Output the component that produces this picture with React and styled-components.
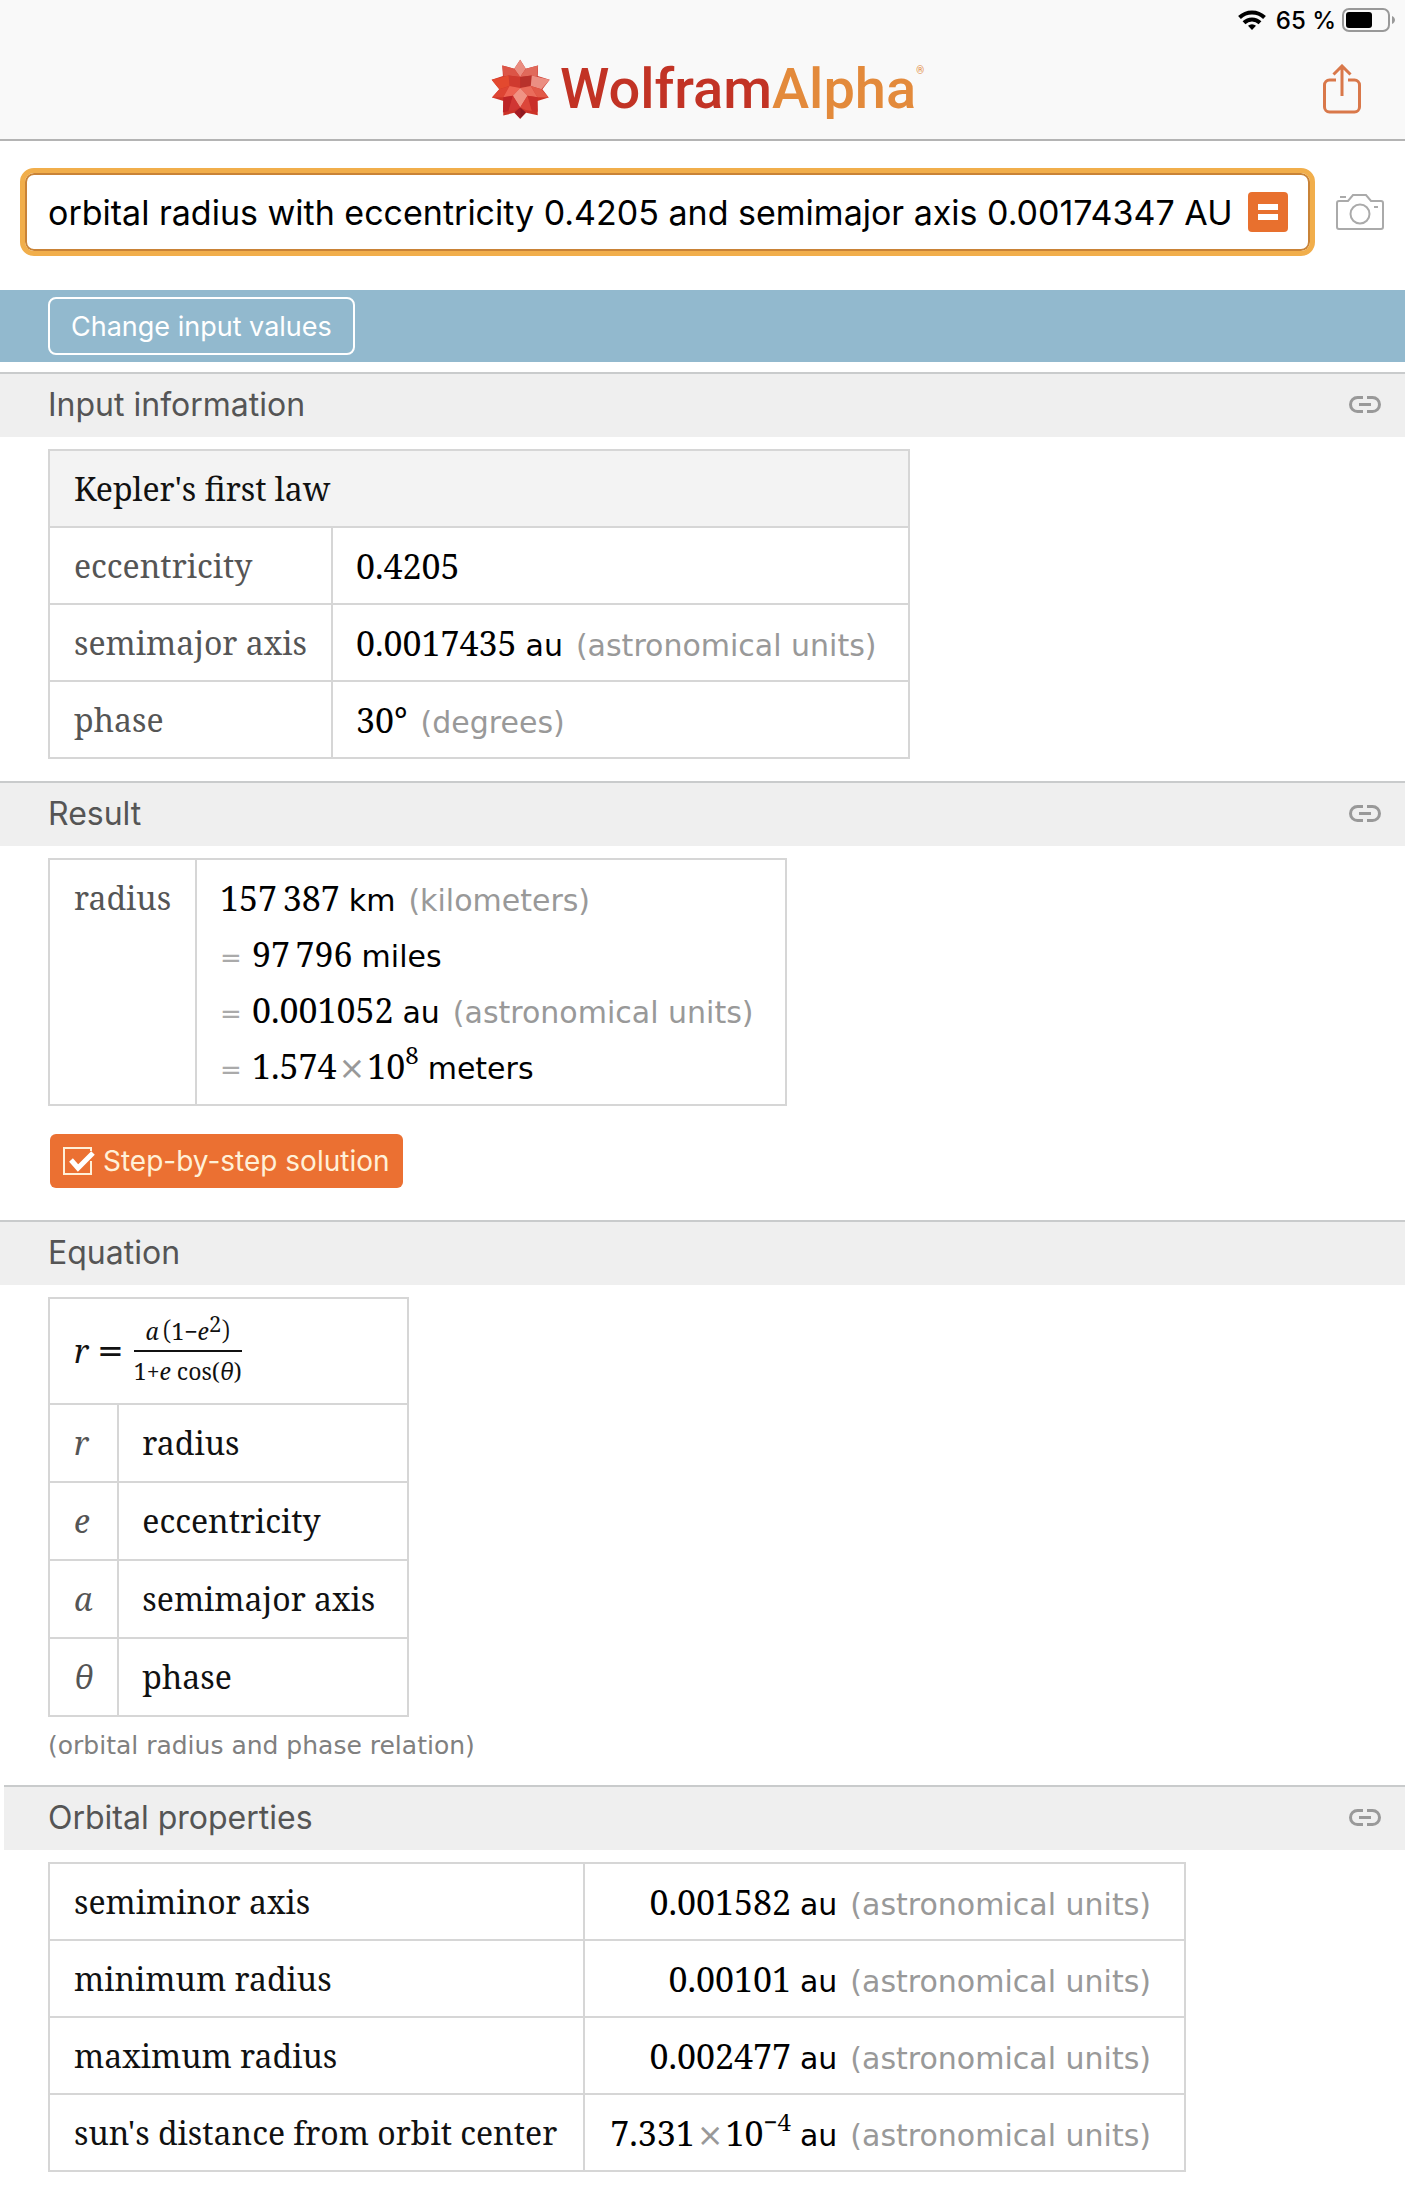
import React, { useState } from "react";
import styled, { createGlobalStyle } from "styled-components";

const GlobalStyle = createGlobalStyle`
  * {
    box-sizing: border-box;
  }
  body {
    margin: 0;
    background-color: #fff;
    color: #111;
    font-family: Inter, "Liberation Sans", sans-serif;
  }
`;

const serif = `"Noto Serif", "DejaVu Serif", serif`;
const sans = `"DejaVu Sans", sans-serif`;
const line = "#d6d6d6";

const Header = styled.header`
  background-color: #f9f9f9;
  border-bottom: 2px solid #b4b4b4;
`;
const StatusBar = styled.div`
  display: flex;
  align-items: center;
  justify-content: flex-end;
  height: 40px;
  padding: 0 10px;
  gap: 6px;
  color: #000;
  font-size: 24px;
  font-weight: 500;
`;
const TitleBar = styled.div`
  display: grid;
  grid-template-columns: 1fr auto 1fr;
  align-items: center;
  height: 99px;
  padding: 0 44px 2px 54px;
`;
const Logo = styled.a`
  grid-column: 2;
  display: flex;
  align-items: center;
  gap: 10px;
  text-decoration: none;
`;
const Wordmark = styled.span`
  display: flex;
  font-family: Roboto, sans-serif;
  font-size: 56px;
  font-weight: 500;
  line-height: 64px;
  color: #c23325;
`;
const Alpha = styled.span`
  color: #e38a3b;
`;
const Registered = styled.span`
  font-size: 10px;
  line-height: 28px;
  color: #e38a3b;
`;
const IconButton = styled.button`
  display: flex;
  justify-self: end;
  padding: 0;
  border: none;
  background: none;
  cursor: pointer;
`;

const SearchRow = styled.form`
  display: flex;
  align-items: center;
  gap: 21px;
  padding: 27px 21px 34px 20px;
`;
const SearchBox = styled.label`
  display: flex;
  flex: 1;
  align-items: center;
  height: 88px;
  padding: 0 22px 0 23px;
  gap: 12px;
  border: 5px solid #f1ae4b;
  border-radius: 14px;
  box-shadow: inset 0 0 0 2px #c98337;
`;
const SearchInput = styled.input`
  flex: 1;
  min-width: 0;
  padding: 0;
  border: none;
  outline: none;
  background: none;
  color: #000;
  font-family: Inter, sans-serif;
  font-size: 34px;
`;
const Submit = styled.button`
  display: flex;
  align-items: center;
  justify-content: center;
  width: 40px;
  height: 40px;
  padding: 0;
  border: none;
  border-radius: 4px;
  background-color: #e8702e;
  cursor: pointer;
`;

const ActionBar = styled.div`
  display: flex;
  align-items: center;
  height: 72px;
  margin-bottom: 10px;
  padding: 0 48px;
  background-color: #92b9ce;
`;
const OutlineButton = styled.button`
  height: 58px;
  padding: 0 21px;
  border: 2px solid #fff;
  border-radius: 8px;
  background: none;
  color: #fff;
  font-family: Inter, sans-serif;
  font-size: 27px;
  cursor: pointer;
`;

const Pod = styled.section`
  padding-bottom: ${(props) => props.$bottom || 22}px;
`;
const PodHeader = styled.div`
  display: flex;
  align-items: center;
  justify-content: space-between;
  height: 65px;
  margin-left: ${(props) => (props.$inset ? 4 : 0)}px;
  padding: 0 24px 2px ${(props) => (props.$inset ? 44 : 48)}px;
  border-top: 2px solid #c9cbcc;
  background-color: #efefef;
`;
const PodTitle = styled.h2`
  margin: 0;
  color: #555;
  font-size: 32px;
  font-weight: 400;
`;
const PodBody = styled.div`
  padding: 12px 48px 0;
`;

const Table = styled.table`
  border-collapse: collapse;
  font-family: ${serif};
  font-size: 32px;
  line-height: 44px;
`;
const Row = styled.tr`
  height: ${(props) => props.$height || 77}px;
`;
const cell = `
  padding: 0 24px;
  border: 2px solid ${line};
  font-weight: 400;
  text-align: left;
  white-space: nowrap;
`;
const HeadCell = styled.th`
  ${cell}
  background-color: ${(props) => (props.$plain ? "#fff" : "#f3f3f3")};
`;
const LabelCell = styled.th`
  ${cell}
  width: ${(props) => props.$width}px;
  color: ${(props) => (props.$dark ? "#111" : "#555")};
  font-style: ${(props) => (props.$italic ? "italic" : "normal")};
  vertical-align: ${(props) => (props.$top ? "top" : "middle")};
  ${(props) => props.$top && "padding-top: 16px;"}
`;
const ValueCell = styled.td`
  ${cell}
  width: ${(props) => props.$width}px;
  padding: ${(props) => (props.$stacked ? "10px" : "0")}
    ${(props) => (props.$right ? 33 : 23)}px
    ${(props) => (props.$stacked ? "10px" : "0")} 23px;
  text-align: ${(props) => (props.$right ? "right" : "left")};
`;

const Quantity = styled.div`
  display: flex;
  justify-content: ${(props) => (props.$right ? "flex-end" : "flex-start")};
  align-items: baseline;
  height: 44px;
  color: #000;
`;
const Num = styled.span`
  font-size: 34px;
`;
const Times = styled.span`
  margin: 0 2px;
  color: #999;
  font-family: ${sans};
  font-size: 32px;
  line-height: 0;
`;
const Sup = styled.sup`
  font-size: 24px;
  line-height: 0;
  vertical-align: 15px;
`;
const Unit = styled.span`
  margin-left: 9px;
  font-family: ${sans};
  font-size: 30px;
`;
const Note = styled.span`
  margin-left: 13px;
  color: #999;
  font-family: ${sans};
  font-size: 30px;
`;
const Lines = styled.div`
  display: flex;
  flex-direction: column;
  gap: 12px;
  padding: 6px 0;
`;
const Equals = styled.span`
  margin-right: 10px;
  color: #aaa;
  font-family: ${sans};
  font-size: 26px;
`;

const StepButton = styled.button`
  display: flex;
  align-items: center;
  gap: 8px;
  height: 54px;
  margin: 28px 0 0 2px;
  padding: 0 13px;
  border: none;
  border-radius: 6px;
  background-color: #eb7032;
  color: #fff0d8;
  font-family: Inter, sans-serif;
  font-size: 28px;
  cursor: pointer;
`;

const Formula = styled.div`
  display: flex;
  align-items: center;
  gap: 8px;
`;
const FormulaEquals = styled.span`
  font-family: ${sans};
  font-size: 32px;
`;
const Fraction = styled.div`
  display: flex;
  flex-direction: column;
  align-items: center;
  margin-left: 2px;
  font-size: 23px;
  line-height: 38px;
`;
const Numerator = styled.div`
  align-self: stretch;
  border-bottom: 2px solid #111;
  text-align: center;
`;
const Paren = styled.span`
  font-size: 28px;
  font-weight: 300;
  line-height: 0;
`;
const SmallSup = styled.sup`
  font-size: 22px;
  line-height: 0;
  vertical-align: 8px;
`;
const Caption = styled.p`
  margin: 14px 0 0;
  color: #808080;
  font-family: ${sans};
  font-size: 25px;
  line-height: 30px;
`;

const WifiIcon = () => (
  <svg width="32" height="20" viewBox="0 0 32 20" fill="none" stroke="#000" strokeWidth="4">
    <path d="M1.500 7.500a18 18 0 0 1 25 0" />
    <path d="M6 12.700a11.500 11.500 0 0 1 16 0" />
    <path d="M14 20l-4-4.200a6 6 0 0 1 8 0z" fill="#000" stroke="none" />
  </svg>
);

const BatteryIcon = () => (
  <svg width="53" height="24" viewBox="0 0 53 24">
    <rect x="1" y="1" width="46" height="22" rx="6" fill="none" stroke="#999" strokeWidth="2" />
    <rect x="4" y="4" width="26" height="16" rx="3" fill="#000" />
    <path d="M50 8c4 2 4 6 0 8z" fill="#999" />
  </svg>
);

const ShareIcon = () => (
  <svg width="38" height="50" viewBox="0 0 38 50" fill="none" stroke="#d9784a" strokeWidth="3">
    <path d="M13 16H6.500a5 5 0 0 0-5 5v22a5 5 0 0 0 5 5h25a5 5 0 0 0 5-5V21a5 5 0 0 0-5-5H25" />
    <path d="M19 32V2M10.500 10.500L19 2l8.500 8.500" />
  </svg>
);

const CameraIcon = () => (
  <svg width="48" height="38" viewBox="0 0 48 38" fill="none" stroke="#aaa" strokeWidth="2">
    <path d="M3 8h9l5-6h13l5 6h10a2 2 0 0 1 2 2v24a2 2 0 0 1-2 2H3a2 2 0 0 1-2-2V10a2 2 0 0 1 2-2z" />
    <circle cx="24" cy="21" r="9.500" />
    <path d="M4 4h6M38 14h4" />
  </svg>
);

const LinkIcon = () => (
  <svg width="32" height="17" viewBox="0 0 32 17" fill="none" stroke="#999" strokeWidth="3">
    <path d="M14 1.500H8.500a7 7 0 0 0 0 14H14M18 1.500h5.500a7 7 0 0 1 0 14H18M10 8.500h12" />
  </svg>
);

const CheckIcon = () => (
  <svg width="32" height="30" viewBox="0 0 32 30" fill="none">
    <path d="M28 15v13H1V2h27v3" stroke="#fff0d8" strokeWidth="2" />
    <path d="M8 14l7 8L30 7" stroke="#fff" strokeWidth="5" />
  </svg>
);

// spikey polyhedron, drawn facet by facet
const Spikey = () => (
  <svg width="59" height="60" viewBox="13 16 178 180">
    <path
      d="M101 18l17 27 37-10-1 32 36 11-22 29 19 25-34 10 1 43-35-7-18 18-18-18-33 8 1-44-35-10 22-25-23-29 34-11-2-32 36 10z"
      fill="#cc3328"
    />
    <path d="M101 18l17 27-17 25-18-25z" fill="#ea8d80" />
    <path d="M47 35l36 10 18 25-35-5-15 3z" fill="#dc5547" />
    <path d="M155 35l-37 10-17 25 35-5 15 3z" fill="#e06a5b" />
    <path d="M66 65l35 5v33l-32-6z" fill="#cf3a2f" />
    <path d="M101 70l35-5-3 32-32 6z" fill="#b8322b" />
    <path d="M15 78l51-13 3 32-31 10z" fill="#e3492f" />
    <path d="M190 78l-54-13-3 32 32 10z" fill="#eb8f83" />
    <path d="M16 132l22-25 31-10-19 34z" fill="#dd4433" />
    <path d="M187 132l-22-25-32-10 20 34z" fill="#e25a49" />
    <path d="M69 97l32 6-22 23-29 5z" fill="#ee6453" />
    <path d="M133 97l-32 6 22 23 30 5z" fill="#ea6c5b" />
    <path d="M101 103l22 23-22 36-22-36z" fill="#f09384" />
    <path d="M50 131l29-5-13 46-17 5z" fill="#bd2427" />
    <path d="M153 131l-30-5 13 46 18 3z" fill="#c92f2b" />
    <path d="M79 126l22 36-17 7-18 3z" fill="#d03533" />
    <path d="M123 126l-22 36 17 7 18 3z" fill="#dc463a" />
    <path d="M101 162v34l-17-20z" fill="#a51c25" />
    <path d="M101 162v34l17-20z" fill="#8f1820" />
  </svg>
);

const AU = () => (
  <>
    <Unit>au</Unit>
    <Note>(astronomical units)</Note>
  </>
);

const PodHead = ({ title, link, inset }) => (
  <PodHeader $inset={inset}>
    <PodTitle>{title}</PodTitle>
    {link && (
      <IconButton type="button" aria-label={`Link to ${title}`}>
        <LinkIcon />
      </IconButton>
    )}
  </PodHeader>
);

const variables = [
  ["r", "radius"],
  ["e", "eccentricity"],
  ["a", "semimajor axis"],
  ["θ", "phase"],
];

const orbital = [
  { label: "semiminor axis", value: "0.001582" },
  { label: "minimum radius", value: "0.00101" },
  { label: "maximum radius", value: "0.002477" },
  { label: "sun's distance from orbit center", value: "7.331", exp: "−4" },
];

const App = () => {
  const [query, setQuery] = useState(
    "orbital radius with eccentricity 0.4205 and semimajor axis 0.00174347 AU"
  );

  return (
    <>
      <GlobalStyle />
      <Header>
        <StatusBar>
          <WifiIcon />
          <span>65 %</span>
          <BatteryIcon />
        </StatusBar>
        <TitleBar>
          <Logo href="#">
            <Spikey />
            <Wordmark>
              Wolfram<Alpha>Alpha</Alpha>
              <Registered>®</Registered>
            </Wordmark>
          </Logo>
          <IconButton type="button" aria-label="Share">
            <ShareIcon />
          </IconButton>
        </TitleBar>
      </Header>
      <SearchRow onSubmit={(e) => e.preventDefault()}>
        <SearchBox>
          <SearchInput
            aria-label="Query"
            value={query}
            onChange={(e) => setQuery(e.target.value)}
          />
          <Submit type="submit" aria-label="Compute">
            <svg width="20" height="16" viewBox="0 0 20 16" fill="#fff">
              <path d="M0 0h20v6H0zM0 10h20v6H0z" />
            </svg>
          </Submit>
        </SearchBox>
        <IconButton type="button" aria-label="Camera">
          <CameraIcon />
        </IconButton>
      </SearchRow>
      <ActionBar>
        <OutlineButton type="button">Change input values</OutlineButton>
      </ActionBar>

      <Pod>
        <PodHead title="Input information" link />
        <PodBody>
          <Table>
            <tbody>
              <Row>
                <HeadCell colSpan={2}>Kepler's first law</HeadCell>
              </Row>
              <Row>
                <LabelCell $width={282}>eccentricity</LabelCell>
                <ValueCell $width={577}>
                  <Quantity>
                    <Num>0.4205</Num>
                  </Quantity>
                </ValueCell>
              </Row>
              <Row>
                <LabelCell>semimajor axis</LabelCell>
                <ValueCell>
                  <Quantity>
                    <Num>0.0017435</Num>
                    <AU />
                  </Quantity>
                </ValueCell>
              </Row>
              <Row>
                <LabelCell>phase</LabelCell>
                <ValueCell>
                  <Quantity>
                    <Num>30°</Num>
                    <Note>(degrees)</Note>
                  </Quantity>
                </ValueCell>
              </Row>
            </tbody>
          </Table>
        </PodBody>
      </Pod>

      <Pod $bottom={32}>
        <PodHead title="Result" link />
        <PodBody>
          <Table>
            <tbody>
              <Row>
                <LabelCell $width={146} $top>
                  radius
                </LabelCell>
                <ValueCell $width={590} $stacked>
                  <Lines>
                    <Quantity>
                      <Num>157&#8201;387</Num>
                      <Unit>km</Unit>
                      <Note>(kilometers)</Note>
                    </Quantity>
                    <Quantity>
                      <Equals>=</Equals>
                      <Num>97&#8201;796</Num>
                      <Unit>miles</Unit>
                    </Quantity>
                    <Quantity>
                      <Equals>=</Equals>
                      <Num>0.001052</Num>
                      <AU />
                    </Quantity>
                    <Quantity>
                      <Equals>=</Equals>
                      <Num>
                        1.574<Times>×</Times>10<Sup>8</Sup>
                      </Num>
                      <Unit>meters</Unit>
                    </Quantity>
                  </Lines>
                </ValueCell>
              </Row>
            </tbody>
          </Table>
          <StepButton type="button">
            <CheckIcon />
            Step-by-step solution
          </StepButton>
        </PodBody>
      </Pod>

      <Pod $bottom={24}>
        <PodHead title="Equation" />
        <PodBody>
          <Table>
            <tbody>
              <Row $height={106}>
                <HeadCell colSpan={2} $plain>
                  <Formula>
                    <i>r</i>
                    <FormulaEquals>=</FormulaEquals>
                    <Fraction>
                      <Numerator>
                        <i>a</i>&#8201;
                        <Paren>(</Paren>1−<i>e</i>
                        <SmallSup>2</SmallSup>
                        <Paren>)</Paren>
                      </Numerator>
                      <div>
                        1+<i>e</i> cos(<i>θ</i>)
                      </div>
                    </Fraction>
                  </Formula>
                </HeadCell>
              </Row>
              {variables.map(([symbol, name]) => (
                <Row key={symbol} $height={78}>
                  <LabelCell $width={69} $italic>
                    {symbol}
                  </LabelCell>
                  <ValueCell $width={290}>{name}</ValueCell>
                </Row>
              ))}
            </tbody>
          </Table>
          <Caption>(orbital radius and phase relation)</Caption>
        </PodBody>
      </Pod>

      <Pod>
        <PodHead title="Orbital properties" link inset />
        <PodBody>
          <Table>
            <tbody>
              {orbital.map(({ label, value, exp }) => (
                <Row key={label}>
                  <LabelCell $width={535} $dark>
                    {label}
                  </LabelCell>
                  <ValueCell $width={601} $right>
                    <Quantity $right>
                      <Num>
                        {value}
                        {exp && (
                          <>
                            <Times>×</Times>10<Sup>{exp}</Sup>
                          </>
                        )}
                      </Num>
                      <AU />
                    </Quantity>
                  </ValueCell>
                </Row>
              ))}
            </tbody>
          </Table>
        </PodBody>
      </Pod>
    </>
  );
};

export default App;
